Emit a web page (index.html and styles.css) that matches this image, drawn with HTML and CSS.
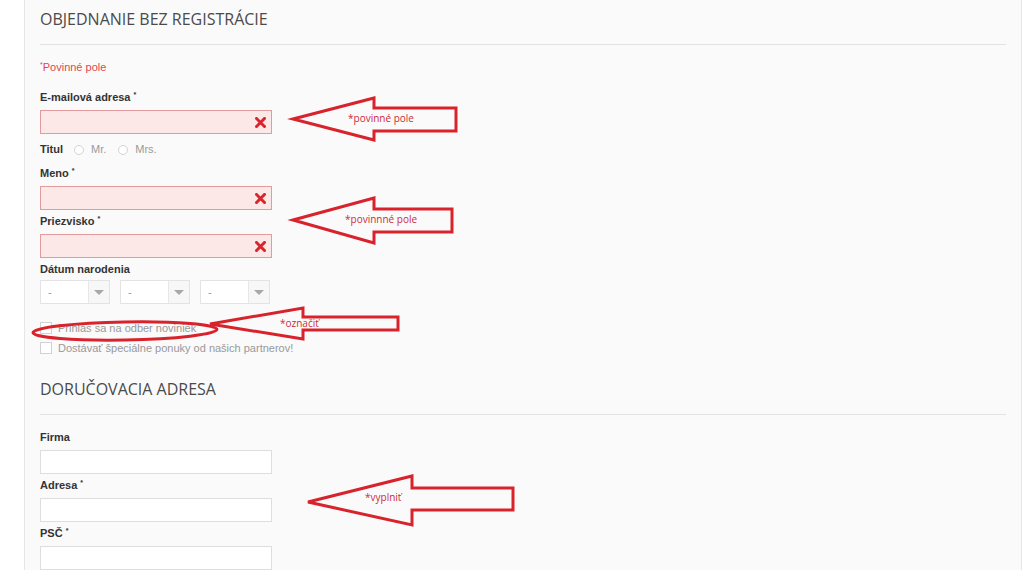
FILE: index.html
```html
<!DOCTYPE html>
<html>
<head>
    <title>Objednanie bez registrácie</title>
    <link rel="stylesheet" href="styles.css">
</head>
<body>

    <div class="checkout">

        <h2 class="section-title">Objednanie bez registrácie</h2>

        <p class="required-note"><sup>*</sup>Povinné pole</p>

        <div class="field">
            <label>E-mailová adresa <sup>*</sup></label>
            <div class="input error"><span class="x-icon"><svg width="11" height="11" viewBox="0 0 11 11"><path d="M1.5 1.5 L9.5 9.5 M9.5 1.5 L1.5 9.5" stroke="#d9262e" stroke-width="3" stroke-linecap="square"/></svg></span></div>
        </div>

        <div class="title-row">
            <span class="title-label">Titul</span>
            <span class="radio"></span><span class="radio-text">Mr.</span>
            <span class="radio"></span><span class="radio-text">Mrs.</span>
        </div>

        <div class="field">
            <label>Meno <sup>*</sup></label>
            <div class="input error"><span class="x-icon"><svg width="11" height="11" viewBox="0 0 11 11"><path d="M1.5 1.5 L9.5 9.5 M9.5 1.5 L1.5 9.5" stroke="#d9262e" stroke-width="3" stroke-linecap="square"/></svg></span></div>
        </div>

        <div class="field">
            <label>Priezvisko <sup>*</sup></label>
            <div class="input error"><span class="x-icon"><svg width="11" height="11" viewBox="0 0 11 11"><path d="M1.5 1.5 L9.5 9.5 M9.5 1.5 L1.5 9.5" stroke="#d9262e" stroke-width="3" stroke-linecap="square"/></svg></span></div>
        </div>

        <div class="field">
            <label class="date-label">Dátum narodenia</label>
            <div class="selects">
                <div class="select"><span class="select-value">-</span><span class="select-btn"><i class="caret"></i></span></div>
                <div class="select"><span class="select-value">-</span><span class="select-btn"><i class="caret"></i></span></div>
                <div class="select"><span class="select-value">-</span><span class="select-btn"><i class="caret"></i></span></div>
            </div>
        </div>

        <div class="checks">
            <div class="check"><span class="box"></span>Prihlás sa na odber noviniek</div>
            <div class="check"><span class="box"></span>Dostávať špeciálne ponuky od našich partnerov!</div>
        </div>

        <h2 class="section-title second">Doručovacia adresa</h2>

        <div class="field">
            <label>Firma</label>
            <div class="input"></div>
        </div>

        <div class="field">
            <label>Adresa <sup>*</sup></label>
            <div class="input"></div>
        </div>

        <div class="field">
            <label>PSČ <sup>*</sup></label>
            <div class="input"></div>
        </div>

    </div>

    <!-- red hand-drawn notes on top of the form -->
    <svg class="notes" width="1024" height="570" viewBox="0 0 1024 570">
        <g fill="none" stroke="#d8222c" stroke-width="3" stroke-linejoin="miter">
            <polygon points="293,119 374,98 374,108 456,108 456,131 374,131 374,140"/>
            <polygon points="293,220 374,198 374,209 452,209 452,232 374,232 374,243"/>
            <polygon points="210,324 303,308 303,317 398,317 398,330 303,330 303,339"/>
            <polygon points="308,502 412,476 412,488 513,488 513,510 412,510 412,525"/>
            <ellipse cx="125" cy="331" rx="92" ry="9" transform="rotate(-1 125 331)"/>
        </g>
        <g class="note-text">
            <text x="348" y="122">*povinné pole</text>
            <text x="345" y="223">*povinnné pole</text>
            <text x="280" y="327">*označiť</text>
            <text x="365" y="501">*vyplniť</text>
        </g>
    </svg>

</body>
</html>
```

FILE: styles.css
```css
/* page */
body {
    margin: 0;
    padding: 0;
    background-color: #fff;
    font-family: "Liberation Sans", Arial, sans-serif;
    font-size: 11px;
    color: #333;
    height: 570px;
    overflow: hidden;
}

.checkout {
    margin-left: 24px;
    width: 966px;
    min-height: 570px;
    padding: 8px 15px 0 15px;
    background-color: #fafafa;
    border-left: 1px solid #e6e6e6;
    border-right: 1px solid #e6e6e6;
}

/* section headings */
.section-title {
    margin: 0 0 15px 0;
    padding-bottom: 14px;
    border-bottom: 1px solid #e3e3e3;
    font-family: "Open Sans", sans-serif;
    font-weight: normal;
    font-size: 16px;
    line-height: 22px;
    text-transform: uppercase;
    color: #4a4a4a;
}

.section-title.second {
    margin-top: 20px;
}

.required-note {
    margin: 0 0 15px 0;
    line-height: 15px;
    color: #e0474f;
}

sup {
    font-size: 7px;
    vertical-align: top;
    line-height: 9px;
}

/* fields */
.field {
    margin-bottom: 4px;
}

.field label {
    display: block;
    font-weight: bold;
    line-height: 15px;
    margin-bottom: 5px;
    color: #333;
}

.field .date-label {
    margin-bottom: 3px;
}

.input {
    box-sizing: border-box;
    width: 232px;
    height: 24px;
    background-color: #fff;
    border: 1px solid #dedede;
    display: flex;
    align-items: center;
    justify-content: flex-end;
    padding-right: 5px;
}

.input.error {
    background-color: #fde8e8;
    border-color: #e19a9e;
}

.x-icon svg {
    display: block;
}

/* title radios */
.title-row {
    display: flex;
    align-items: center;
    margin: 8px 0 9px 0;
    line-height: 15px;
}

.title-label {
    font-weight: bold;
    margin-right: 11px;
}

.radio {
    box-sizing: border-box;
    width: 10px;
    height: 10px;
    border: 1px solid #d4d4d4;
    border-radius: 50%;
    background-color: #fff;
    margin-right: 7px;
}

.radio-text {
    color: #9a9a9a;
    margin-right: 12px;
}

/* date selects */
.selects {
    display: flex;
    gap: 10px;
}

.select {
    box-sizing: border-box;
    width: 70px;
    height: 24px;
    background-color: #fff;
    border: 1px solid #e3e3e3;
    display: flex;
}

.select-value {
    flex: 1;
    padding-left: 7px;
    line-height: 22px;
    color: #999;
}

.select-btn {
    width: 20px;
    border-left: 1px solid #e8e8e8;
    background-color: #f7f7f7;
    display: flex;
    align-items: center;
    justify-content: center;
}

.caret {
    width: 0;
    height: 0;
    border-left: 5px solid transparent;
    border-right: 5px solid transparent;
    border-top: 5px solid #a8a8a8;
}

/* checkboxes */
.checks {
    margin-top: 14px;
}

.check {
    display: flex;
    align-items: center;
    height: 20px;
    color: #999;
}

.box {
    box-sizing: border-box;
    width: 12px;
    height: 12px;
    border: 1px solid #d2d2d2;
    background-color: #fff;
    margin-right: 6px;
}

/* annotations over the form */
.notes {
    position: absolute;
    left: 0;
    top: 0;
    pointer-events: none;
}

.note-text {
    font-family: "Open Sans", sans-serif;
    font-size: 10px;
    fill: #cc2a3a;
}
```
